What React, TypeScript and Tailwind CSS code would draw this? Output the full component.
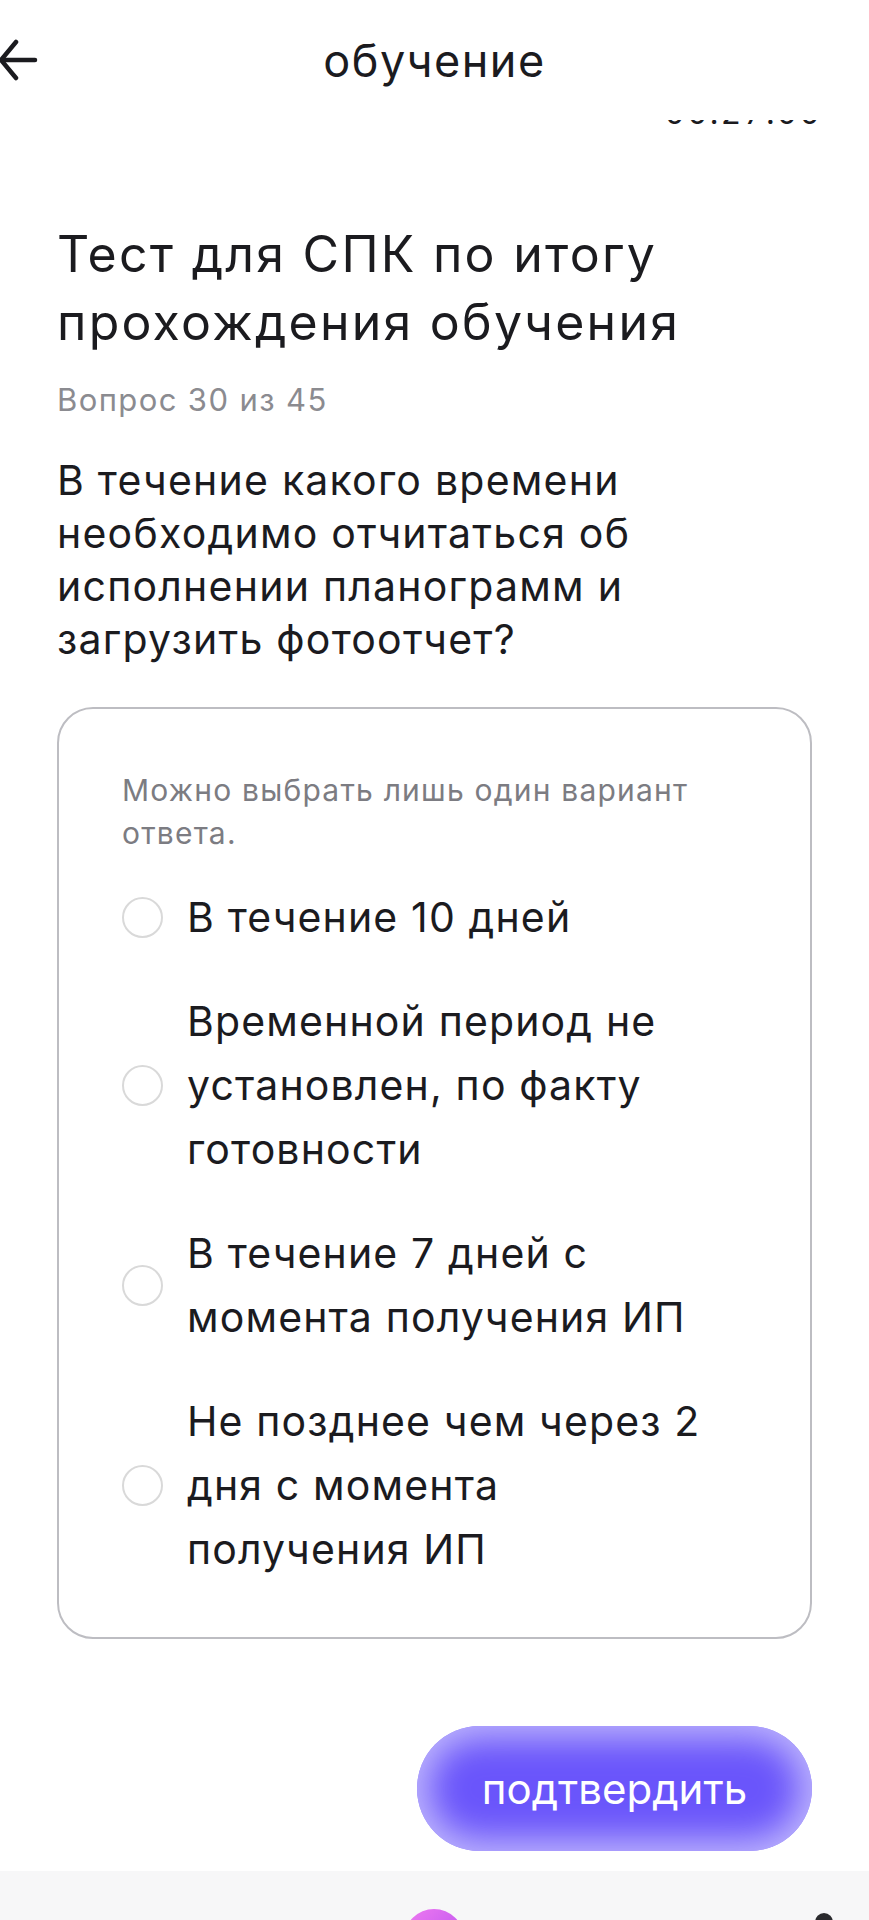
import React from 'react';

const options = [
  'В течение 10 дней',
  'Временной период не установлен, по факту готовности',
  'В течение 7 дней с момента получения ИП',
  'Не позднее чем через 2 дня с момента получения ИП',
];

function BackArrow() {
  return (
    <svg width="40" height="44" viewBox="0 0 40 44" fill="none" stroke="#1b1b1f" strokeWidth="4.5" strokeLinecap="round" strokeLinejoin="round">
      <path d="M35 22H2" />
      <path d="M16 4L1 22L16 40" />
    </svg>
  );
}

export default function App() {
  return (
    <div className="min-h-screen bg-white font-['Inter',sans-serif] text-[#1b1b1f]">
      {/* Header */}
      <header className="grid h-[120px] grid-cols-[120px_1fr_120px] items-center">
        <div className="flex items-center">
          <BackArrow />
        </div>
        <div className="text-center text-[45px] leading-none tracking-[1.5px]">обучение</div>
        <div />
      </header>

      {/* timer scrolled under header */}
      <div className="h-[5px] overflow-hidden pr-[47px] text-right">
        <div className="-mt-[23px] text-[32px] leading-[32px] tracking-[2px] tabular-nums">00:27:00</div>
      </div>

      <main className="px-[57px]">
        <h1 className="mt-[95px] text-[50px] leading-[68px] tracking-[0.045em]">
          Тест для СПК по итогу прохождения обучения
        </h1>
        <div className="mt-[24px] text-[31px] leading-[40px] tracking-[0.045em] text-[#8b8b90]">Вопрос 30 из 45</div>
        <p className="mt-[34px] text-[41px] leading-[53px] tracking-[0.03em]">
          В течение какого времени необходимо отчитаться об исполнении планограмм и загрузить фотоотчет?
        </p>

        {/* Answers card */}
        <div className="mt-[41px] rounded-[36px] border-2 border-[#bdbdc2] pb-[56px] pl-[63px] pr-[84px] pt-[60px]">
          <p className="text-[30px] leading-[43px] tracking-[0.04em] text-[#7c7c82]">
            Можно выбрать лишь один вариант ответа.
          </p>
          <div className="mt-[30px] flex flex-col gap-[40px]">
            {options.map((o) => (
              <label key={o} className="flex items-center gap-[24px]">
                <span className="h-[41px] w-[41px] shrink-0 rounded-full border-2 border-[#d9d9d9]" />
                <span className="flex-1 text-[41px] leading-[64px] tracking-[0.028em]">{o}</span>
              </label>
            ))}
          </div>
        </div>

        <div className="mt-[87px] flex justify-end">
          <button className="flex h-[125px] w-[395px] items-center justify-center rounded-full bg-[#6a55fb] text-[42px] text-white shadow-[inset_0_0_34px_12px_rgba(200,192,253,0.9)]">
            подтвердить
          </button>
        </div>
      </main>

      {/* Bottom nav peek */}
      <div className="relative mt-[20px] h-[50px] overflow-hidden bg-[#f7f7f8]">
        <div className="absolute left-[404px] top-[38px] h-[60px] w-[60px] rounded-full bg-[linear-gradient(135deg,#f07af0,#b04cf0)]" />
        <div className="absolute left-[815px] top-[42px] h-[18px] w-[18px] rounded-full bg-[#2a2a2e]" />
      </div>
    </div>
  );
}
